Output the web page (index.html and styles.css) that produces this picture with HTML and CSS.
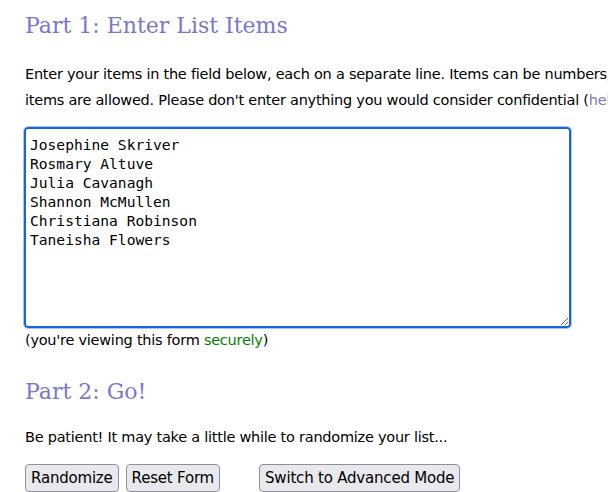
FILE: index.html
```html
<!DOCTYPE html>
<html>
<head>
<meta charset="utf-8">
<link rel="stylesheet" href="styles.css">
</head>
<body>
<div class="page">
  <h2 class="part-title">Part 1: Enter List Items</h2>
  <p class="intro">Enter your items in the field below, each on a separate line. Items can be numbers, names, email addresses, etc. A maximum of 10,000<br>items are allowed. Please don't enter anything you would consider confidential (<a class="link" href="#">help</a>).</p>
  <div class="field-wrap">
    <textarea class="items" spellcheck="true">Josephine Skriver
Rosmary Altuve
Julia Cavanagh
Shannon McMullen
Christiana Robinson
Taneisha Flowers</textarea>
  </div>
  <p class="secure">(you're viewing this form <span class="green">securely</span>)</p>
  <h2 class="part-title part-two">Part 2: Go!</h2>
  <p class="patience">Be patient! It may take a little while to randomize your list...</p>
  <div class="buttons">
    <button class="btn">Randomize</button>
    <button class="btn">Reset Form</button>
    <button class="btn btn-adv">Switch to Advanced Mode</button>
  </div>
</div>
</body>
</html>
```
FILE: styles.css
```css
html, body {
  margin: 0;
  padding: 0;
  overflow: hidden;
  background: #fff;
}
body {
  font-family: "DejaVu Sans", sans-serif;
  font-size: 14.5px;
  letter-spacing: -0.25px;
  color: #000;
}
.page {
  padding: 8px 0 0 25px;
  width: 1200px;
}
.part-title {
  font-family: "DejaVu Serif", serif;
  font-weight: normal;
  font-size: 22px;
  letter-spacing: 0;
  color: #7a78c8;
  margin: 0;
  line-height: 36px;
}
.intro {
  margin: 17px 0 0 0;
  line-height: 26px;
  white-space: nowrap;
}
.link {
  color: #7a78c8;
  text-decoration: none;
}
.field-wrap {
  margin-top: 14px;
}
.items {
  display: block;
  width: 547px;
  height: 201px;
  box-sizing: border-box;
  margin: 0 0 0 -1px;
  padding: 6px 4px;
  border: 2px solid #1664e0;
  border-radius: 4px;
  outline: 1px solid #a9c4ef;
  font-family: "DejaVu Sans Mono", monospace;
  font-size: 14.6px;
  letter-spacing: 0;
  line-height: 19px;
  color: #000;
  resize: both;
}
.secure {
  margin: 1px 0 0 0;
  line-height: 22px;
}
.green {
  color: #008000;
}
.part-two {
  margin-top: 23px;
}
.patience {
  margin: 16px 0 0 0;
  line-height: 22px;
}
.buttons {
  margin-top: 16px;
  display: flex;
  gap: 7px;
}
.btn {
  font-family: "DejaVu Sans", sans-serif;
  font-size: 15px;
  letter-spacing: -0.2px;
  background: #e9e9ed;
  border: 1px solid #8f8f9d;
  border-radius: 4px;
  padding: 4px 5px;
  color: #000;
  line-height: 18px;
}
.btn-adv {
  margin-left: 32px;
}
```
